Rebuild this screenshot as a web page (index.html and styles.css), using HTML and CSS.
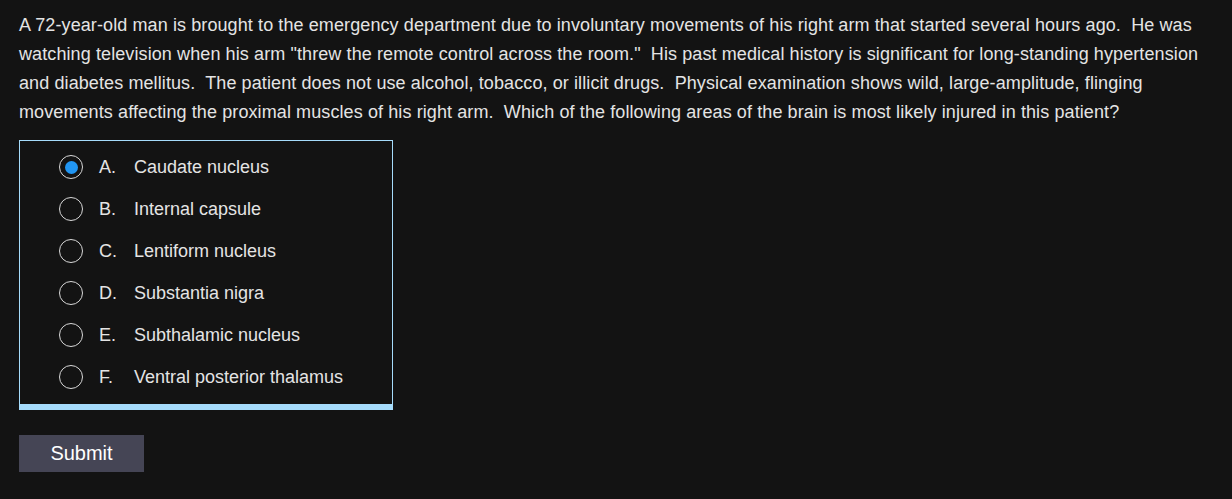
FILE: index.html
```html
<!DOCTYPE html>
<html>
<head>
<meta charset="utf-8">
<link rel="stylesheet" href="styles.css">
</head>
<body>
<div class="page">
  <p class="stem">A 72-year-old man is brought to the emergency department due to involuntary movements of his right arm that started several hours ago.&nbsp; He was watching television when his arm "threw the remote control across the room."&nbsp; His past medical history is significant for long-standing hypertension and diabetes mellitus.&nbsp; The patient does not use alcohol, tobacco, or illicit drugs.&nbsp; Physical examination shows wild, large-amplitude, flinging movements affecting the proximal muscles of his right arm.&nbsp; Which of the following areas of the brain is most likely injured in this patient?</p>
  <div class="choices">
    <div class="choice"><span class="radio checked"></span><span class="letter">A.</span><span class="label">Caudate nucleus</span></div>
    <div class="choice"><span class="radio"></span><span class="letter">B.</span><span class="label">Internal capsule</span></div>
    <div class="choice"><span class="radio"></span><span class="letter">C.</span><span class="label">Lentiform nucleus</span></div>
    <div class="choice"><span class="radio"></span><span class="letter">D.</span><span class="label">Substantia nigra</span></div>
    <div class="choice"><span class="radio"></span><span class="letter">E.</span><span class="label">Subthalamic nucleus</span></div>
    <div class="choice"><span class="radio"></span><span class="letter">F.</span><span class="label">Ventral posterior thalamus</span></div>
  </div>
  <button class="submit">Submit</button>
</div>
</body>
</html>
```
FILE: styles.css
```css
html, body {
  margin: 0;
  padding: 0;
  background: #131313;
  height: 100%;
}
.page {
  padding: 11px 19px 0 19px;
  font-family: "Liberation Sans", Arial, sans-serif;
  color: #e4e4e4;
}
.stem {
  margin: 0;
  font-size: 18px;
  line-height: 29px;
  letter-spacing: 0.1px;
  max-width: 1195px;
}
.choices {
  margin-top: 13px;
  width: 372px;
  border: 1px solid #a6dcfb;
  border-bottom: 6px solid #a6dcfb;
  padding: 5px 0 6px 0;
}
.choice {
  display: flex;
  align-items: center;
  height: 42px;
  font-size: 18px;
}
.radio {
  width: 24px;
  height: 24px;
  border: 1.5px solid #d8d8d8;
  border-radius: 50%;
  margin-left: 39px;
  box-sizing: border-box;
  display: flex;
  align-items: center;
  justify-content: center;
  flex-shrink: 0;
}
.radio.checked::after {
  content: "";
  width: 13px;
  height: 13px;
  border-radius: 50%;
  background: #2196f3;
}
.letter {
  margin-left: 16px;
  width: 35px;
}
.submit {
  margin-top: 25px;
  width: 125px;
  height: 37px;
  background: #454555;
  border: none;
  color: #ffffff;
  font-family: "Liberation Sans", Arial, sans-serif;
  font-size: 20px;
  padding: 0;
  display: block;
}
```
